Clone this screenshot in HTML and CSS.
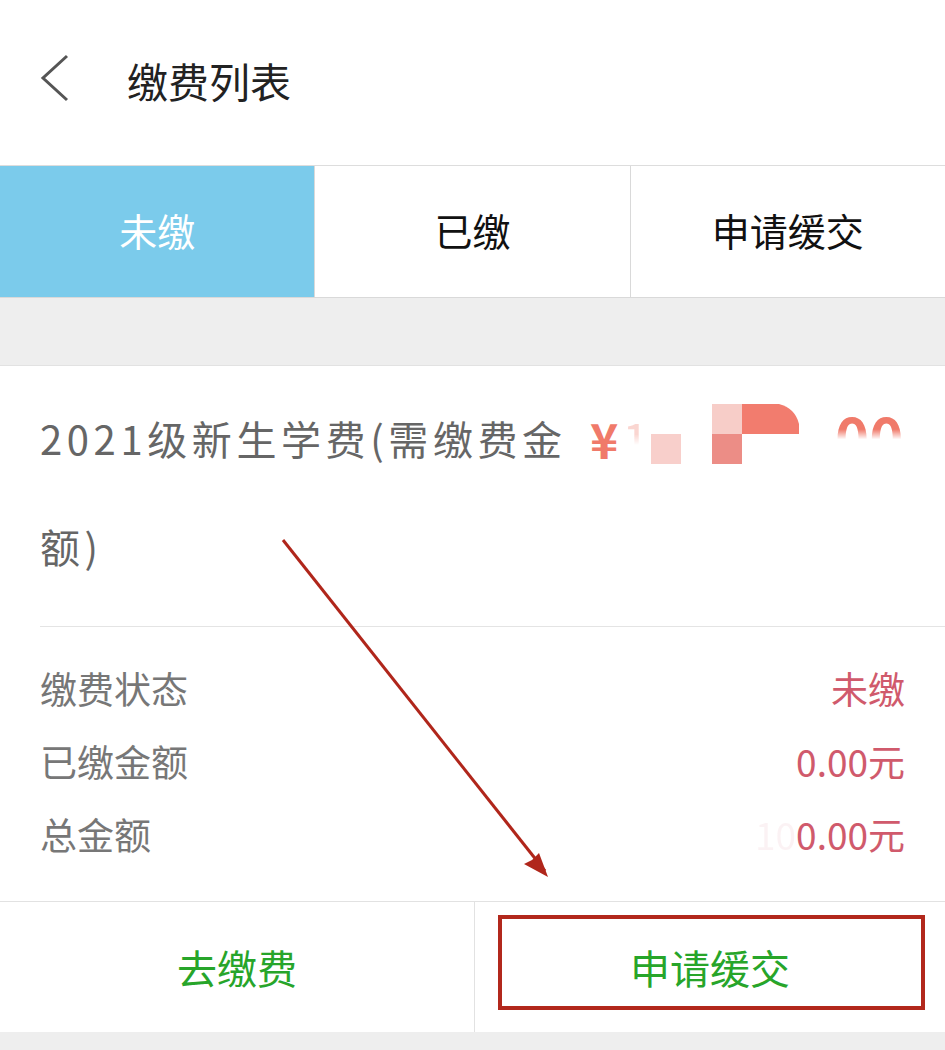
FILE: index.html
```html
<!DOCTYPE html>
<html lang="zh-CN">
<head>
    <meta charset="UTF-8">
    <meta name="viewport" content="width=device-width, initial-scale=1.0">
    <title>缴费列表</title>
    <link rel="stylesheet" href="styles.css">
</head>
<body>
    <div class="page">
        <header class="top-bar">
            <svg class="back-icon" width="30" height="50" viewBox="0 0 30 50">
                <polyline points="27,2 3,24 27,46" fill="none" stroke="#555" stroke-width="3"/>
            </svg>
            <h1 class="top-title">缴费列表</h1>
        </header>

        <nav class="tabs">
            <div class="tab active">未缴</div>
            <div class="tab">已缴</div>
            <div class="tab">申请缓交</div>
        </nav>

        <div class="spacer"></div>

        <section class="fee-card">
            <div class="fee-head">
                <div class="fee-name">2021级新生学费(需缴费金额)</div>
                <div class="fee-amount">
                    <span class="yen">¥</span><span class="faded">1</span><svg class="mosaic" width="200" height="62" viewBox="0 0 200 62">
                        <rect x="22" y="30" width="30" height="30" fill="#f8cfcb"/>
                        <rect x="83" y="0" width="30" height="30" fill="#f7cdc8"/>
                        <rect x="83" y="30" width="30" height="30" fill="#ec8d86"/>
                        <path d="M113 0 H150 Q166 4 170 20 V30 H113 Z" fill="#f27c6e"/>
                    </svg><span class="half">00</span>
                </div>
            </div>
            <div class="fee-rows">
                <div class="fee-row"><span>缴费状态</span><span class="val">未缴</span></div>
                <div class="fee-row"><span>已缴金额</span><span class="val">0.00元</span></div>
                <div class="fee-row"><span>总金额</span><span class="val"><span class="blur">10</span>0.00元</span></div>
            </div>
        </section>

        <div class="actions">
            <div class="action">去缴费</div>
            <div class="action">申请缓交<span class="mark-box"></span></div>
        </div>

        <div class="footer-gap"></div>

        <svg class="arrow" width="945" height="1050" viewBox="0 0 945 1050">
            <line x1="283" y1="540" x2="545" y2="871" stroke="#b0261b" stroke-width="3"/>
            <polygon points="548,877 524,864 532,860 539,853" fill="#b0261b"/>
        </svg>
    </div>
</body>
</html>
```

FILE: styles.css
```css
body {
    margin: 0;
    background: #fff;
    font-family: "Noto Sans CJK SC", "Noto Sans", sans-serif;
}

.page {
    position: relative;
    width: 945px;
    height: 1050px;
    overflow: hidden;
    display: flex;
    flex-direction: column;
}

.top-bar {
    display: flex;
    align-items: center;
    padding-left: 40px;
    border-bottom: 1px solid #ddd;
    box-sizing: border-box;
    height: 166px;
}

.back-icon {
    display: block;
    margin-top: -8px;
}

.top-title {
    margin: 0 0 6px 57px;
    font-size: 41px;
    font-weight: normal;
    color: #222;
}

.tabs {
    display: flex;
    height: 132px;
    border-bottom: 1px solid #d9d9d9;
    box-sizing: border-box;
}

.tab {
    flex: 1;
    display: flex;
    align-items: center;
    justify-content: center;
    padding-bottom: 4px;
    font-size: 38px;
    color: #111;
    border-left: 1px solid #d9d9d9;
}

.tab:first-child {
    border-left: none;
}

.tab.active {
    background: #7bcbeb;
    color: #fff;
}

.spacer {
    height: 67px;
    background: #eeeeee;
    border-bottom: 1px solid #e2e2e2;
}

.fee-card {
    background: #fff;
}

.fee-head {
    display: flex;
    align-items: flex-start;
    padding: 18px 40px 26px 40px;
}

.fee-name {
    width: 535px;
    font-size: 40px;
    line-height: 108px;
    letter-spacing: 4.6px;
    color: #666;
}

.fee-amount {
    margin-left: 15px;
    display: flex;
    align-items: center;
    height: 108px;
    font-size: 48px;
    color: #f07a6a;
}

.yen {
    font-weight: bold;
}

.faded {
    opacity: 0.3;
    margin-left: 4px;
    -webkit-mask-image: linear-gradient(to bottom, #000 45%, transparent 60%);
    mask-image: linear-gradient(to bottom, #000 45%, transparent 60%);
}

.mosaic {
    display: block;
    margin-left: -20px;
    margin-top: -6px;
}

.half {
    margin-left: 6px;
    margin-top: -4px;
    font-size: 58px;
    font-weight: bold;
    -webkit-mask-image: linear-gradient(to bottom, #000 42%, transparent 54%);
    mask-image: linear-gradient(to bottom, #000 42%, transparent 54%);
}

.fee-rows {
    margin-left: 40px;
    padding: 24px 40px 31px 0;
    border-top: 1px solid #e4e4e4;
}

.fee-row {
    height: 73px;
    display: flex;
    align-items: center;
    justify-content: space-between;
    font-size: 37px;
    color: #777;
}

.fee-row .val {
    color: #d05a6c;
}

.blur {
    opacity: 0.07;
}

.actions {
    display: flex;
    height: 130px;
    border-top: 1px solid #e2e2e2;
}

.action {
    position: relative;
    display: flex;
    align-items: center;
    justify-content: center;
    font-size: 40px;
    color: #27a52a;
    width: 474px;
}

.action + .action {
    flex: 1;
    border-left: 1px solid #e2e2e2;
}

.mark-box {
    position: absolute;
    left: 23px;
    right: 20px;
    top: 13px;
    bottom: 22px;
    border: 4px solid #b2281c;
}

.footer-gap {
    flex: 1;
    background: #eeeeee;
}

.arrow {
    position: absolute;
    left: 0;
    top: 0;
    pointer-events: none;
}
```
